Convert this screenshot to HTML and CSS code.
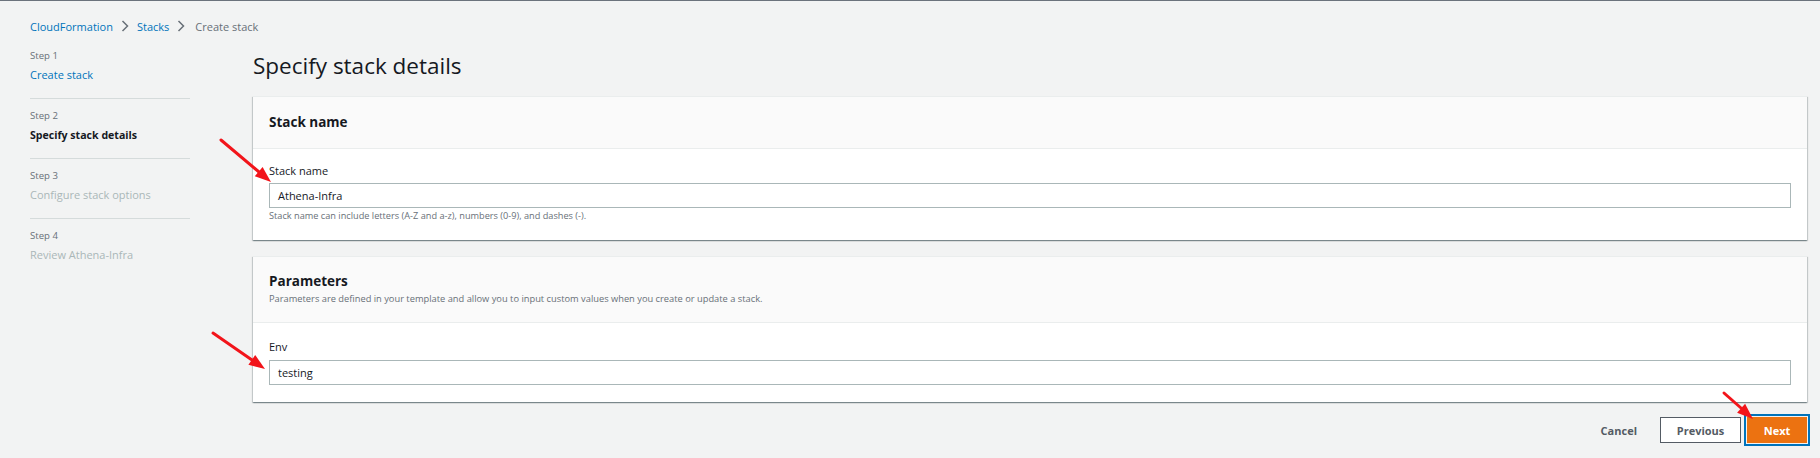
FILE: index.html
```html
<!DOCTYPE html>
<html>
<head>
<meta charset="utf-8">
<link rel="stylesheet" href="styles.css">
</head>
<body>
<div class="page">
  <nav class="crumbs">
    <a class="crumb-link">CloudFormation</a>
    <svg class="chev" width="8" height="12" viewBox="0 0 8 12"><path d="M1.5 1 L6.5 6 L1.5 11" fill="none" stroke="#687078" stroke-width="1.5"/></svg>
    <a class="crumb-link">Stacks</a>
    <svg class="chev" width="8" height="12" viewBox="0 0 8 12"><path d="M1.5 1 L6.5 6 L1.5 11" fill="none" stroke="#687078" stroke-width="1.5"/></svg>
    <span class="crumb-current">Create stack</span>
  </nav>
  <div class="layout">
    <aside class="steps">
      <div class="step">
        <div class="step-num">Step 1</div>
        <div class="step-title link">Create stack</div>
      </div>
      <div class="step">
        <div class="step-num">Step 2</div>
        <div class="step-title active">Specify stack details</div>
      </div>
      <div class="step">
        <div class="step-num">Step 3</div>
        <div class="step-title disabled">Configure stack options</div>
      </div>
      <div class="step last">
        <div class="step-num">Step 4</div>
        <div class="step-title disabled">Review Athena-Infra</div>
      </div>
    </aside>
    <main class="main">
      <h1 class="title">Specify stack details</h1>
      <section class="card">
        <div class="card-head">
          <h2 class="card-title">Stack name</h2>
        </div>
        <div class="card-body one">
          <label class="field-label">Stack name</label>
          <div class="input">Athena-Infra</div>
          <div class="hint">Stack name can include letters (A-Z and a-z), numbers (0-9), and dashes (-).</div>
        </div>
      </section>
      <section class="card">
        <div class="card-head two">
          <h2 class="card-title">Parameters</h2>
          <div class="card-desc">Parameters are defined in your template and allow you to input custom values when you create or update a stack.</div>
        </div>
        <div class="card-body two">
          <label class="field-label">Env</label>
          <div class="input">testing</div>
        </div>
      </section>
      <div class="actions">
        <button class="btn btn-link">Cancel</button>
        <button class="btn btn-normal">Previous</button>
        <button class="btn btn-primary">Next</button>
      </div>
    </main>
  </div>
</div>
<svg class="annot" width="1820" height="458" viewBox="0 0 1820 458">
  <g stroke="#f2141a" stroke-width="3" stroke-linecap="round">
    <line x1="221" y1="139" x2="259" y2="171"/>
    <line x1="213" y1="332" x2="252" y2="359"/>
    <line x1="1724" y1="392" x2="1741" y2="407"/>
  </g>
  <g fill="#f2141a">
    <polygon points="271,181 254.8,175.3 262.6,166.1"/>
    <polygon points="265,368 248.4,363.8 255.2,354"/>
    <polygon points="1753,418 1737.1,411.8 1745.1,402.8"/>
  </g>
</svg>
</body>
</html>
```

FILE: styles.css
```css
* { box-sizing: border-box; }
html, body { margin: 0; padding: 0; }
body {
  background: #f2f3f3;
  font-family: "Open Sans", "Noto Sans", Arial, sans-serif;
  color: #16191f;
  width: 1820px;
  height: 458px;
  overflow: hidden;
  border-top: 1px solid #6b737c;
  position: relative;
}
.page {
  padding: 15px 13px 0 30px;
}
.crumbs {
  display: flex;
  align-items: center;
  height: 20px;
  font-size: 11px;
  gap: 8px;
}
.crumbs .chev + .crumb-current { margin-left: 2px; }
.crumb-link { color: #0073bb; }
.crumb-current { color: #687078; }
.chev { display: block; }
.layout {
  display: grid;
  grid-template-columns: 160px 1fr;
  column-gap: 63px;
  margin-top: 3px;
}
.steps { display: flex; flex-direction: column; }
.step {
  padding: 8px 0 13px;
  border-bottom: 1px solid #d5dbdb;
}
.step.last { border-bottom: none; }
.step-num {
  font-size: 9.6px;
  line-height: 18px;
  color: #687078;
}
.step-title {
  font-size: 11px;
  line-height: 20px;
}
.step-title.link { color: #0073bb; }
.step-title.active { font-weight: 700; color: #16191f; font-size: 10.6px; }
.step-title.disabled { color: #aab7b8; }

.main { display: flex; flex-direction: column; min-width: 0; }
.title {
  margin: 12px 0 15px;
  font-size: 22.5px;
  line-height: 30px;
  font-weight: 400;
  color: #16191f;
}
.card {
  background: #fff;
  border-top: 1px solid #eaeded;
  box-shadow: 0 1px 1px 0 rgba(0,28,36,.3), 1px 1px 1px 0 rgba(0,28,36,.15), -1px 1px 1px 0 rgba(0,28,36,.15);
  margin-bottom: 16px;
}
.card-head {
  background: #fafafa;
  border-bottom: 1px solid #eaeded;
  padding: 15px 16px 16px;
}
.card-head.two { padding: 14px 16px 16px; }
.card-title {
  margin: 0;
  font-size: 13.5px;
  line-height: 20px;
  font-weight: 700;
  color: #16191f;
}
.card-desc {
  margin-top: 1px;
  font-size: 9.3px;
  line-height: 14px;
  color: #687078;
}
.card-body { padding: 14px 16px 17px; display: flex; flex-direction: column; }
.card-body.two { padding: 16px 16px 17px; }
.field-label {
  font-size: 11px;
  line-height: 16px;
  color: #16191f;
}
.card-body.one .field-label { margin-bottom: 4px; }
.card-body.two .field-label { margin-bottom: 5px; }
.input {
  height: 25px;
  border: 1px solid #aab7b8;
  padding: 0 8px;
  font-size: 11px;
  line-height: 23px;
  color: #16191f;
  background: #fff;
}
.hint {
  margin-top: 1px;
  font-size: 9.2px;
  line-height: 14px;
  color: #687078;
}
.actions {
  display: flex;
  justify-content: flex-end;
  align-items: center;
  gap: 6px;
  margin-top: -1px;
}
.btn {
  font-family: inherit;
  font-size: 11px;
  font-weight: 700;
  height: 26px;
  padding: 0 14px;
  cursor: pointer;
}
.btn-link {
  background: none;
  border: none;
  color: #545b64;
  padding: 0 17px 0 18px;
}
.btn-normal {
  background: #fff;
  border: 1px solid #545b64;
  color: #545b64;
  width: 81px;
}
.btn-primary {
  background: #ec7211;
  border: 1px solid #ec7211;
  color: #fff;
  width: 60px;
  outline: 2px solid #0073bb;
  outline-offset: 1px;
}
.annot {
  position: absolute;
  left: 0;
  top: 0;
  pointer-events: none;
}
```
